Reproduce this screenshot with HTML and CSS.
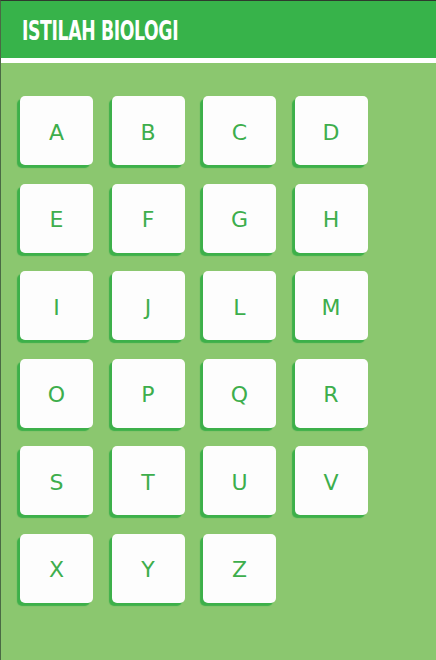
FILE: index.html
```html
<!DOCTYPE html>
<html lang="en">
<head>
  <meta charset="UTF-8" />
  <meta name="viewport" content="width=device-width, initial-scale=1.0" />
  <title>Istilah Biologi</title>
  <link rel="stylesheet" href="styles.css">
</head>
<body>

  <header class="topbar">
    <h1>ISTILAH BIOLOGI</h1>
  </header>

  <div class="letters">
    <button class="letter">A</button>
    <button class="letter">B</button>
    <button class="letter">C</button>
    <button class="letter">D</button>
    <button class="letter">E</button>
    <button class="letter">F</button>
    <button class="letter">G</button>
    <button class="letter">H</button>
    <button class="letter">I</button>
    <button class="letter">J</button>
    <button class="letter">L</button>
    <button class="letter">M</button>
    <button class="letter">O</button>
    <button class="letter">P</button>
    <button class="letter">Q</button>
    <button class="letter">R</button>
    <button class="letter">S</button>
    <button class="letter">T</button>
    <button class="letter">U</button>
    <button class="letter">V</button>
    <button class="letter">X</button>
    <button class="letter">Y</button>
    <button class="letter">Z</button>
  </div>

</body>
</html>
```
FILE: styles.css
```css
html, body {
  height: 100%;
}

body {
  margin: 0;
  background: #8bc76f;
  border-top: 1px solid #2e3a2e;
  border-left: 1px solid #4a6a44;
  box-sizing: border-box;
  font-family: "DejaVu Sans", sans-serif;
}

.topbar {
  background: #37b34a;
  height: 57px;
  border-bottom: 5px solid #ffffff;
  display: flex;
  align-items: center;
  padding-left: 21px;
}

.topbar h1 {
  margin: 0;
  color: #ffffff;
  font-family: "DejaVu Sans Condensed", "DejaVu Sans", sans-serif;
  font-weight: bold;
  font-size: 27px;
  letter-spacing: -0.5px;
  transform: scaleX(0.71);
  transform-origin: left center;
  margin-top: 2px;
}

.letters {
  display: grid;
  grid-template-columns: repeat(4, 73px);
  grid-auto-rows: 69px;
  column-gap: 18.5px;
  row-gap: 18.5px;
  padding: 33px 0 0 19px;
}

.letter {
  background: #fdfdfd;
  border: none;
  border-radius: 5px;
  box-shadow: -3px 3px 1px #3db04a;
  color: #3dae4c;
  font-family: "DejaVu Sans", sans-serif;
  font-size: 22px;
  padding: 3px 0 0;
  cursor: pointer;
}
```
